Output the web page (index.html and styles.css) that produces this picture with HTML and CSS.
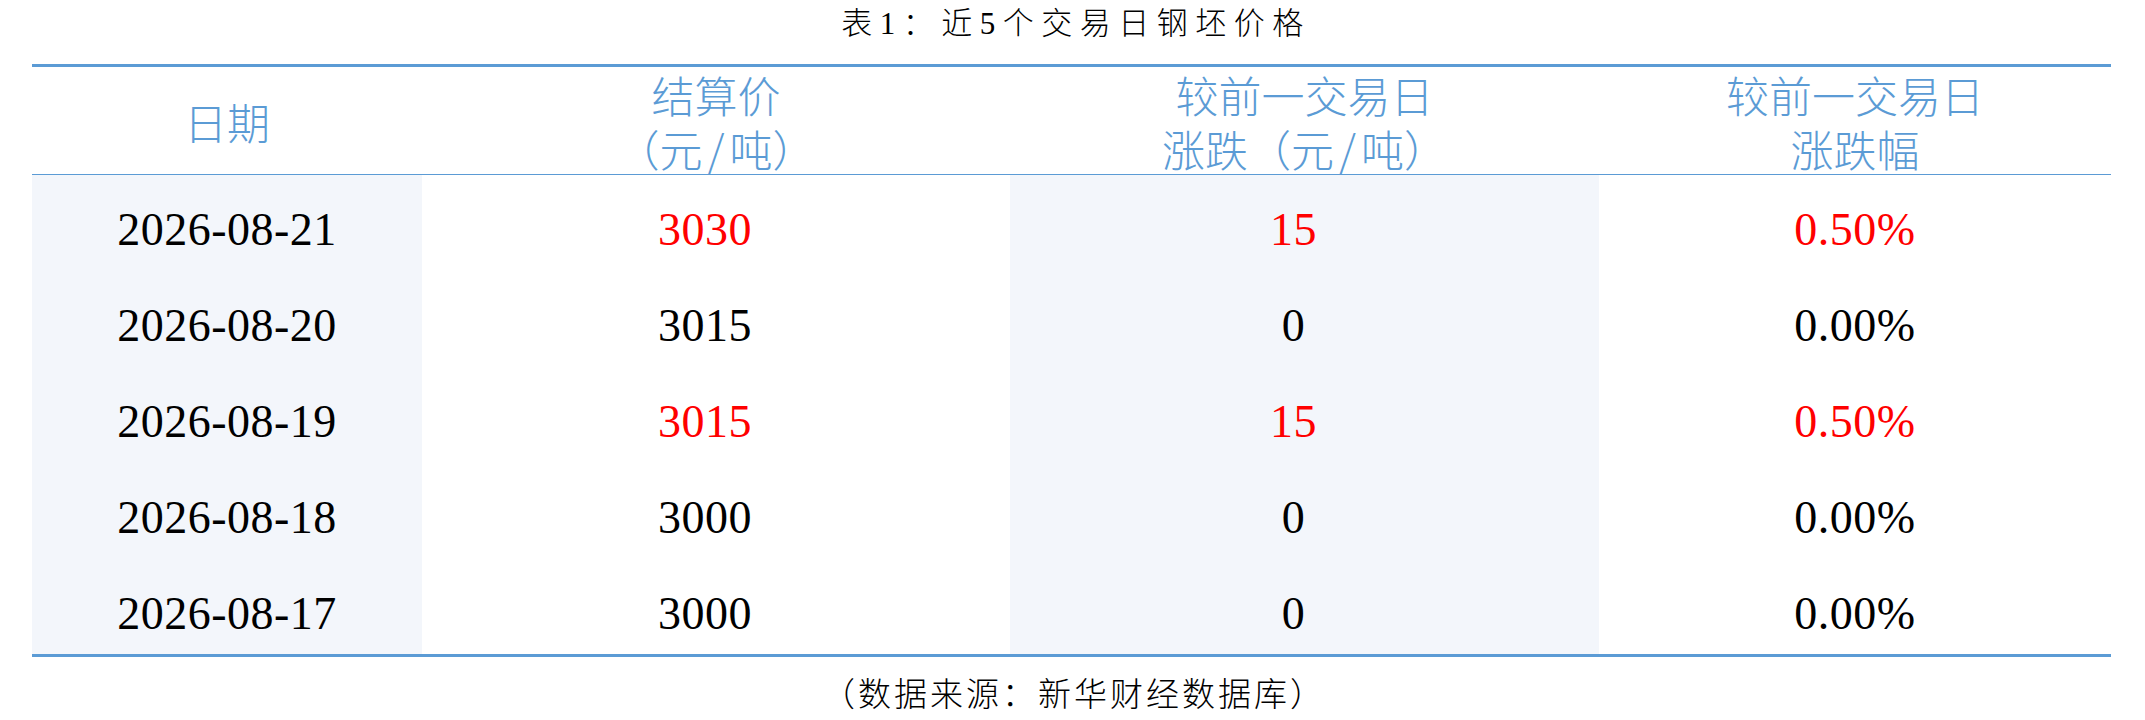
FILE: index.html
```html
<!DOCTYPE html>
<html lang="zh-CN">
<head>
<meta charset="utf-8">
<title>近5个交易日钢坯价格</title>
<link rel="stylesheet" href="styles.css">
</head>
<body>
<div class="page">
  <div class="title">表1：近5个交易日钢坯价格</div>
  <div class="table">
    <div class="head">
      <div class="hc"><span class="hl">日期</span></div>
      <div class="hc"><span class="hl">结算价</span><span class="hl">（元<span class="sl">/</span>吨）</span></div>
      <div class="hc"><span class="hl">较前一交易日</span><span class="hl">涨跌（元<span class="sl">/</span>吨）</span></div>
      <div class="hc"><span class="hl">较前一交易日</span><span class="hl">涨跌幅</span></div>
    </div>
    <div class="body">
      <div class="row">
        <div class="c c1">2026-08-21</div>
        <div class="c c2 up">3030</div>
        <div class="c c3 up">15</div>
        <div class="c c4 up">0.50%</div>
      </div>
      <div class="row">
        <div class="c c1">2026-08-20</div>
        <div class="c c2">3015</div>
        <div class="c c3">0</div>
        <div class="c c4">0.00%</div>
      </div>
      <div class="row">
        <div class="c c1">2026-08-19</div>
        <div class="c c2 up">3015</div>
        <div class="c c3 up">15</div>
        <div class="c c4 up">0.50%</div>
      </div>
      <div class="row">
        <div class="c c1">2026-08-18</div>
        <div class="c c2">3000</div>
        <div class="c c3">0</div>
        <div class="c c4">0.00%</div>
      </div>
      <div class="row">
        <div class="c c1">2026-08-17</div>
        <div class="c c2">3000</div>
        <div class="c c3">0</div>
        <div class="c c4">0.00%</div>
      </div>
    </div>
  </div>
  <div class="note">（数据来源：新华财经数据库）</div>
</div>
</body>
</html>
```

FILE: styles.css
```css
html, body {
  margin: 0;
  padding: 0;
  background: #ffffff;
}

.page {
  width: 2145px;
  height: 720px;
  overflow: hidden;
  font-family: "Liberation Serif", "Noto Sans CJK SC", serif;
  color: #000000;
}

.title {
  height: 48px;
  line-height: 48px;
  margin-bottom: 16px;
  text-align: center;
  font-size: 31px;
  letter-spacing: 7.5px;
  font-weight: 300;
  padding-left: 7px;
}

.table {
  margin-left: 32px;
  width: 2079px;
  border-top: 3px solid #5b9bd5;
  border-bottom: 3px solid #5b9bd5;
}

.head {
  display: grid;
  grid-template-columns: 390px 588px 589px 1fr;
  height: 107px;
  border-bottom: 1px solid #5b9bd5;
}

.hc {
  display: flex;
  flex-direction: column;
  align-items: center;
  justify-content: center;
  text-align: center;
  font-family: "Noto Sans CJK SC", sans-serif;
  font-weight: 300;
  font-size: 43px;
  color: #5b9bd5;
}

.hl {
  display: block;
  height: 54px;
  line-height: 54px;
  white-space: nowrap;
}

.sl {
  margin: 0 5px;
}

.body {
  display: grid;
  grid-template-rows: repeat(5, 1fr);
  height: 479px;
}

.row {
  display: grid;
  grid-template-columns: 390px 588px 589px 1fr;
}

.c {
  display: flex;
  align-items: center;
  justify-content: center;
  font-size: 46px;
  letter-spacing: 0.5px;
  padding-top: 14px;
  box-sizing: border-box;
}

.c1, .c3 {
  background: #f3f6fb;
}

.c2, .c3 {
  padding-right: 22px;
}

.up {
  color: #ff0000;
}

.note {
  margin-top: 14px;
  height: 48px;
  line-height: 48px;
  text-align: center;
  font-size: 33px;
  letter-spacing: 3px;
  font-weight: 300;
  padding-left: 3px;
}
```
